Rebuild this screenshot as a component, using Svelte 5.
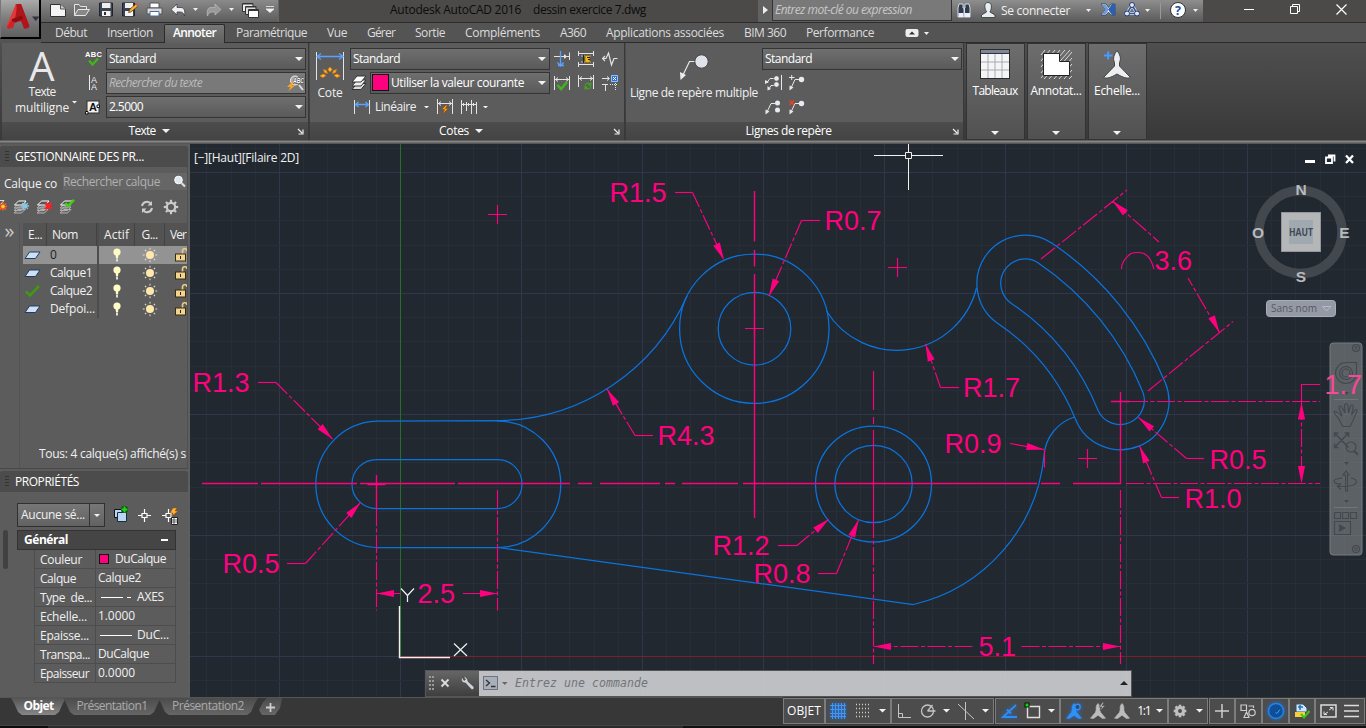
<script>
  const PINK = '#ff007f';

  // Spreads a label's letters so that it takes the given width.
  function fit(node, width) {
    const text = node.textContent;
    if (!width || !text) return;
    const natural = node.getBoundingClientRect().width;
    node.style.letterSpacing = `${(width - natural) / text.length}px`;
  }

  const tabs = [
    ['Début', 32], ['Insertion', 46], ['Annoter', 43], ['Paramétrique', 71], ['Vue', 20], ['Gérer', 28],
    ['Sortie', 30], ['Compléments', 75], ['A360', 26], ['Applications associées', 118], ['BIM 360', 42], ['Performance', 68]
  ];

  const layers = [
    { name: '0', width: 6, selected: true },
    { name: 'Calque1', width: 42 },
    { name: 'Calque2', width: 42, current: true },
    { name: 'Defpoi...', width: 45 }
  ];

  const props = [
    { k: 'Couleur', kw: 42, v: 'DuCalque', vw: 51, swatch: true },
    { k: 'Calque', kw: 36, v: 'Calque2', vw: 43 },
    { k: 'Type  de...', kw: 52, v: 'AXES', vw: 27, line: 'M1 6H23M27 6h4' },
    { k: 'Echelle...', kw: 47, v: '1.0000', vw: 37 },
    { k: 'Epaisse...', kw: 49, v: 'DuC...', vw: 32, line: 'M0 6H32' },
    { k: 'Transpa...', kw: 50, v: 'DuCalque', vw: 51 },
    { k: 'Epaisseur', kw: 49, v: '0.0000', vw: 37 }
  ];

  // Drawing grid: a major line every 121 px, a minor one every fifth of that.
  const gridX = [];
  for (let i = -8; i <= 40; i++) gridX.push({ p: 400.4 + i * 24.2, major: i % 5 === 0 });
  const gridY = [];
  for (let i = -21; i <= 1; i++) gridY.push({ p: 656.4 + i * 24.2, major: i % 5 === 0 });

  const texts = [
    [609.5, 202, 'R1.5'], [824.5, 230, 'R0.7'], [192.5, 392, 'R1.3'], [222.5, 573, 'R0.5'], [417.5, 603, '2.5'],
    [657.5, 445, 'R4.3'], [712.5, 555, 'R1.2'], [753.5, 583, 'R0.8'], [963, 397, 'R1.7'], [944.5, 453, 'R0.9'],
    [1209.5, 469, 'R0.5'], [1184.5, 508, 'R1.0'], [1154.5, 270, '3.6'], [978.5, 656, '5.1']
  ];

  // Leaders: tip, knee and end of the landing.
  const leaders = [
    [724, 260, 692.5, 192.5, 675], [769, 296, 801.5, 220.5, 820], [332.5, 439, 276, 382.5, 258],
    [360.5, 502.5, 305.5, 563.5, 287], [607, 389, 635, 435.5, 653], [829, 519, 797, 545.5, 778],
    [858.5, 520, 836.5, 573.5, 818], [925.5, 344, 940.5, 387.5, 959], [1138.5, 417.5, 1186.5, 458.5, 1204],
    [1139.5, 446, 1161.5, 497.5, 1179]
  ];

  const arrows = [
    ...leaders.map((l) => l.slice(0, 4)),
    [376.5, 593.5, 400, 593.5], [497.5, 593.5, 463, 593.5], [873.5, 646.5, 900, 646.5], [1120.5, 646.5, 1100, 646.5],
    [1301.5, 402, 1301.5, 430], [1301.5, 483.5, 1301.5, 460], [1044, 449.5, 1010, 443.5],
    [1112.5, 201, 1142, 228], [1219.5, 332.5, 1204, 302]
  ];

  function head([x, y, fx, fy]) {
    const d = Math.hypot(fx - x, fy - y);
    const ux = (fx - x) / d;
    const uy = (fy - y) / d;
    const bx = x + ux * 17.5;
    const by = y + uy * 17.5;
    return `${x},${y} ${bx - uy * 3.6},${by + ux * 3.6} ${bx + uy * 3.6},${by - ux * 3.6}`;
  }

  const crosses = [[497.5, 214.5], [897.5, 267.5], [1087.5, 458.5], [754.5, 328.5]];
  const dirs = [0, 45, 90, 135, 180, 225, 270, 315];
</script>

{#snippet t(text, width)}<span class="t" use:fit={width}>{text}</span>{/snippet}

{#snippet caret(w = 8)}<svg class="caret" width={w} height={w / 2} viewBox="0 0 8 4"><path d="M0 0H8L4 4Z" fill="#f2f2f2" /></svg>{/snippet}

{#snippet launcher()}<svg class="launcher" width="7" height="7" viewBox="0 0 7 7"><path d="M1 1L5 5M6 1.5V6H1.5" stroke="#eee" stroke-width="1.2" fill="none" /></svg>{/snippet}

{#snippet sheets(over)}
  <svg width="18" height="16" viewBox="0 0 18 16">
    <path d="M5 10.500H12L8.500 14H1Z M5 8H12L8.500 11.500H1Z M5 5.500H12L8.500 9H1Z" fill="#666" stroke="#b0b0b0" />
    <path d="M5.500 2H13L9.500 6H1.500Z" fill="#555" stroke="#fff" />
    {#if over === 'frost'}
      <path d="M12 3V11M8 7H16M9.200 4.200L14.800 9.800M14.800 4.200L9.200 9.800" stroke="#8ac6e0" stroke-width="1.300" />
    {:else if over === 'del'}
      <path d="M9.500 4L15.500 10M15.500 4L9.500 10" stroke="#ff1f1f" stroke-width="2.500" />
    {:else if over === 'ok'}
      <path d="M6.500 4L9 7L15 .8" stroke="#3fd10c" stroke-width="2.500" fill="none" />
    {/if}
  </svg>
{/snippet}

{#snippet person(color, extra)}
  <svg class:glow={extra === 'ring'} width="18" height="18" viewBox="0 0 18 18">
    <path d="M9 1.500C7.300 3 6.800 5.500 7.200 8L6.300 10.500L1.500 16.200L4.500 16.500L9 13.200L13.500 16.500L16.500 16.200L11.700 10.500L10.800 8C11.200 5.500 10.700 3 9 1.500Z" fill={color} stroke={color} stroke-width=".6" />
    {#if extra === 'ring'}<circle cx="12.500" cy="5" r="2.700" fill="#2d4a70" stroke={color} stroke-width="1.400" />{/if}
    {#if extra === 'bolt'}<path d="M13.500 .5L10 5H13L11 9L16 3.800H13L15 .5Z" fill={color} stroke="#505050" stroke-width=".6" />{/if}
  </svg>
{/snippet}

{#snippet dimIcon(kind)}
  <svg width="16" height="16" viewBox="0 0 16 16" fill="none" stroke="#e4e4e4">
    {#if kind === 'break'}
      <path d="M0 5.500H15M15.500 1.500V9M10.500 3.500V7.500M12 4l-2 1.500l2 1.500" />
      <path d="M6.500 0V15M3.500 11.500L6.500 15L9.500 11.500M4 14.500H10" stroke="#5aa2ff" stroke-width="1.300" />
    {:else if kind === 'space'}
      <path d="M1 2.500H15M.5 0V5M15.500 0V5M1 13.500H15M.5 11V16M15.500 11V16" />
      <path d="M3 5H13M3 11H13" stroke="#bbb" stroke-dasharray="2 1" />
      <path d="M7 4.500H12V11.500H7Z" fill="#f5b617" stroke="#6e5000" stroke-width=".6" /><path d="M9 6.500H12M10 8.500H12M5.500 4V12" stroke="#222" />
    {:else if kind === 'jog'}
      <path d="M0 7.500H4L6.500 2L9.500 14L12 7.500H15.500M3 5L.5 7.500L3 10" stroke-width="1.200" />
    {:else if kind === 'check'}
      <path d="M.5 1V15M15.500 1V15M1 4.500H15M4 2.500L1.500 4.500L4 6.500M12 2.500L14.500 4.500L12 6.500" />
      <path d="M3.500 10L7 14L13 7" stroke="#3fb618" stroke-width="2.500" />
    {:else if kind === 'update'}
      <path d="M.5 0V12M15.500 0V14M1 3.500H15M4 1.500L1.500 3.500L4 5.500M12 1.500L14.500 3.500L12 5.500" />
      <path d="M7 10.500A3 3 0 0 1 12.500 9.500M12.700 7.500V10H10.300M12.800 11.500A3 3 0 0 1 7.300 12.500M7 14.500V12H9.500" stroke="#3fa51c" stroke-width="1.300" />
    {:else if kind === 'assoc'}
      <path d="M0 3.500H7M5 1.500L7.500 3.500L5 5.500M0 9.500H6M3.500 9.500V16" /><path d="M8 9.500H15.500M13.500 8V16" stroke-dasharray="1 1" />
      <path d="M9.500 .5H15.500V6.500H9.500Z" fill="#2f6fd0" stroke="#8cc4ff" /><path d="M11 2L14 5M14 2L11 5" stroke="#fff" />
    {:else if kind === 'linear'}
      <path d="M.5 1V15M15.500 1V15" /><path d="M2 5.500H14M4.500 3L1.500 5.500L4.500 8M11.500 3L14.500 5.500L11.500 8" stroke="#5aa2ff" stroke-width="1.300" />
    {:else if kind === 'quick'}
      <path d="M.5 0V15M15.500 0V15M1 4.500H15M4 2.500L1.500 4.500L4 6.500M12 2.500L14.500 4.500L12 6.500" />
      <path d="M9 6L4.500 10.500H7.500L5.500 15L11.500 9.500H8.500L10.500 6Z" fill="#ff9d1a" stroke="#7a3b00" stroke-width=".5" />
    {:else if kind === 'cont'}
      <path d="M.5 1V15M5.500 3V12M10.500 1V15M15.500 3V15M1 5.500H15M2.500 4v3M7.500 4v3M12.500 4v3" />
    {/if}
  </svg>
{/snippet}

{#snippet mleader(kind)}
  <svg width="18" height="16" viewBox="0 0 18 16" fill="none" stroke="#e8e8e8">
    {#if kind === 'align'}
      <path d="M10 3.500H5L1.500 8M10 10.500H6L4 14M16.500 0V15" /><path d="M0 5V9L4 7ZM2.500 11V15.500L6 14Z" fill="#e8e8e8" stroke="none" />
      <circle cx="11.500" cy="3.500" r="2.700" fill="#e8ecf2" stroke="#444" stroke-width=".6" /><circle cx="11.500" cy="9.500" r="2.700" fill="#e8ecf2" stroke="#444" stroke-width=".6" />
    {:else if kind === 'collect'}
      <path d="M10 4.500H6L2 13" /><path d="M.5 10.500V15.500L4.500 12.500Z" fill="#e8e8e8" stroke="none" />
      <circle cx="12.500" cy="4" r="2.500" fill="#e8ecf2" stroke="none" /><circle cx="12.500" cy="11" r="2.500" fill="#e8ecf2" stroke="none" />
    {:else}
      <path d="M10 4.500H6L2 13" /><path d="M.5 10.500V15.500L4.500 12.500Z" fill="#e8e8e8" stroke="none" />
      <circle cx="12.500" cy="4.500" r="2.700" fill="#e8ecf2" stroke="none" />
      {#if kind === 'add'}<path d="M0 2.500H5.500M2.700 0V5" />{:else}<path d="M.5 1.500L5 6M5 1.500L.5 6" stroke="#f2401d" stroke-width="1.300" />{/if}
    {/if}
  </svg>
{/snippet}

<div class="app">
  <!-- Title bar and ribbon tabs, with the application button beside both -->
  <header>
    <button class="logo" aria-label="A">
      <svg width="38" height="36" viewBox="0 0 38 36">
        <path d="M14 3H19L27 25C24 24 21 23 19 20L9 23L5 27.500Z" fill="#c21c20" />
        <path d="M14 3L16 16L9 23L5 27.500V24Z" fill="#e2383a" />
        <path d="M15.500 3L19 3L27.500 25C27.500 27 24 28 22 27.500L19 20L13 18Z" fill="#b0151b" />
        <path d="M10 18L20 14.500L21 18L9 23Z" fill="#8c0d12" />
        <path d="M9 20L5 25.500L6 28L11 27L13 21Z" fill="#cf2427" />
        <path d="M30 15.500H37.500L33.700 20Z" fill="#2e3440" />
      </svg>
    </button>
    <div class="heads">
      <div class="titlebar">
        <div class="quick">
          <svg width="238" height="22" viewBox="0 0 238 22" fill="none">
            <path d="M9.500 4.500H19.500L24.500 9V16.500H9.500Z" fill="#f4f4f4" stroke="#333" /><path d="M19.500 4.500V9H24.500" fill="#ccc" stroke="#555" />
            <path d="M33.500 15.500V4.500H38L39.500 6.500H45.500V9" fill="#777" stroke="#e6e6e6" /><path d="M33.500 15.500L37 9.500H48.500L44.500 15.500Z" fill="#888" stroke="#e6e6e6" />
            <path d="M58.500 3H71.500V16H58.500Z" fill="#3b4250" stroke="#20242c" /><path d="M61 3H69.500V8H61Z" fill="#eee" /><path d="M61 11H69.500V16H61Z" fill="#f4f4f4" /><path d="M63 12h2v3h-2z" fill="#333" />
            <path d="M81.500 3H93.500V16H81.500Z" fill="#3b4250" stroke="#20242c" /><path d="M84 3H92V8H84Z" fill="#eee" /><path d="M84 11H92V16H84Z" fill="#f4f4f4" /><path d="M89 9L95 4L97 6L90 12L87.500 12.500Z" fill="#efb53a" stroke="#5a3300" stroke-width=".7" /><path d="M94 4L95.500 3L97.500 5.500L96.500 6.500Z" fill="#e25544" />
            <path d="M109 3H118V8H109Z" fill="#fff" stroke="#555" /><path d="M106 8H121V14H106Z" fill="#d9dbdf" stroke="#555" /><path d="M109 11.500H118V16H109Z" fill="#fff" stroke="#4b6e9e" />
            <path d="M130 9.500L136 4V7.500H140C143 7.500 144.500 10.500 143.500 16C142.500 13 141.500 12 139 12H136V15Z" fill="#eceff4" stroke="#333" stroke-width=".7" />
            <path d="M152 8H157L154.500 11Z" fill="#eee" />
            <path d="M180 9.500L174 4V7.500H170C167 7.500 165.500 10.500 166.500 16C167.500 13 168.500 12 171 12H174V15Z" fill="#999" stroke="#bbb" stroke-width=".7" />
            <path d="M188 8H193L190.500 11Z" fill="#eee" />
            <path d="M201.500 3.500H212V11.500H201.500Z" fill="#eee" stroke="#333" /><path d="M204.500 6.500H215V14.500H204.500Z" fill="#ddd" stroke="#333" /><path d="M207.500 9.500H217.500V17.500H207.500Z" fill="#fff" stroke="#333" /><path d="M202 4h10M205 7h10M208 10.500h9" stroke="#333" />
            <path d="M225 6.500H233M225 9H233L229 12.500Z" fill="#f4f4f4" stroke="#eee" stroke-width=".8" />
          </svg>
        </div>
        <div class="title">{@render t('Autodesk AutoCAD 2016', 131)}{@render t('dessin exercice 7.dwg', 113)}</div>
        <div class="search"><span class="play"></span><div class="field">{@render t('Entrez mot-clé ou expression', 137)}</div></div>
        <div class="account">
          <svg width="49" height="22" viewBox="0 0 49 22">
            <path d="M7 4h4v4h1v9H6V8ZM13 4h4l1 4v9h-5.500V8h.5z" fill="#2f3a4c" stroke="#dfe6ee" stroke-width=".9" /><path d="M6.500 13h5v4h-5zM13 13h5v4h-5z" fill="#eef" />
            <path d="M36 2.500C33 2.500 32.500 5 33 8C33.500 10.500 34.500 11 34.500 12L29.500 15V17.500H43V15L38 12C38 11 39 10.500 39.300 8C39.800 5 39 2.500 36 2.500Z" fill="#e9edf2" stroke="#344" stroke-width=".9" />
          </svg>
          {@render t('Se connecter', 69)}
          <svg width="133" height="22" viewBox="0 0 133 22">
            <path d="M16 9H21L18.500 12Z" fill="#eee" />
            <path d="M31 4H36L38.500 7.500L41 4H45V15H41L38.500 12L36 15H31L35.500 9.500Z" fill="#fff" stroke="#273c60" stroke-width=".8" /><path d="M38 9.500L42 4H45V15H42Z" fill="#2c5faf" /><path d="M31.500 4.500H35.500L38 8V11L35.500 14.500H31.500L35.500 9.500Z" fill="#6e9ad6" />
            <path d="M62 5L57 13.500H67Z" fill="none" stroke="#dbe6fa" stroke-width="3" /><path d="M62 5L57 13.500H67Z" fill="none" stroke="#35549a" stroke-width="1.500" /><circle cx="62" cy="5" r="2.500" fill="#dce7fb" stroke="#223a6c" /><circle cx="57" cy="13.500" r="2.500" fill="#dce7fb" stroke="#223a6c" /><circle cx="67" cy="13.500" r="2.500" fill="#dce7fb" stroke="#223a6c" />
            <path d="M75 9H80L77.500 12Z" fill="#eee" /><path d="M90.500 3V19" stroke="#999" />
            <circle cx="108" cy="10" r="7.500" fill="#fff" stroke="#333" />
            <text x="108" y="14.500" text-anchor="middle" font-family="Open Sans, sans-serif" font-weight="700" font-size="12.500" fill="#1e4fa0">?</text>
            <path d="M123 9H128L125.500 12Z" fill="#eee" />
          </svg>
        </div>
        <div class="window">
          <svg width="11" height="11"><path d="M0 5.500H10" stroke="#fff" /></svg>
          <svg width="11" height="11" fill="none" stroke="#fff"><path d="M.5 2.500H7.500V9.500H.5ZM2.500 2.500V.5H9.500V7.500H7.500" /></svg>
          <svg width="11" height="11" stroke="#fff" stroke-width="1.200"><path d="M.5 .5L10.500 10.500M10.500 .5L.5 10.500" /></svg>
        </div>
      </div>
      <nav class="tabs">
        {#each tabs as [name, width]}
          <div class="tab" class:active={name === 'Annoter'} style:width="{width}px">{@render t(name, width)}</div>
        {/each}
        <svg width="26" height="10" viewBox="0 0 26 10"><rect x=".5" y="1" width="13" height="8" rx="2" fill="#eee" /><path d="M4 6.500L7 3.500L10 6.500Z" fill="#333" /><path d="M19 4H24L21.500 7Z" fill="#eee" /></svg>
      </nav>
    </div>
  </header>

  <section class="ribbon">
    <div class="panel texte">
      <div class="body">
        <div class="big">
          <span class="bigA">A</span>
          {@render t('Texte', 27)}
          <div class="two">{@render t('multiligne', 54)}</div>
        </div>
        <div class="downcaret">{@render caret(5)}</div>
        <div class="side">
          <svg width="18" height="16" viewBox="0 0 18 16"><text x="0" y="5.500" font-family="Liberation Sans, sans-serif" font-size="7.500" font-weight="700" fill="#fff" textLength="17">ABC</text><path d="M4 9.500L7.500 13.500L13 7.500" fill="none" stroke="#3fb618" stroke-width="2.500" /></svg>
          <svg width="18" height="16" viewBox="0 0 18 16"><path d="M4.500 0V15" stroke="#eee" /><text x="6" y="7.500" font-family="Liberation Sans, sans-serif" font-size="9" fill="#eee">A</text><text x="6" y="15" font-family="Liberation Sans, sans-serif" font-size="9" fill="#eee">A</text></svg>
          <svg width="18" height="16" viewBox="0 0 18 16"><rect x="2" y="2" width="12" height="12" fill="#f2f2f2" stroke="#333" /><text x="4" y="12" font-family="Liberation Sans, sans-serif" font-size="11" font-weight="700" fill="#111">A</text><path d="M.5 12.500h2.500v2.500h-2.500zM12 6h2.500v2.500h-2.500z" fill="#fff" stroke="#111" /></svg>
        </div>
        <div class="stack">
          <div class="combo">{@render t('Standard', 47)}{@render caret()}</div>
          <div class="combo find">{@render t('Rechercher du texte', 93)}
            <svg width="18" height="18" viewBox="0 0 18 18"><circle cx="8" cy="6.500" r="4.500" fill="#aaa" stroke="#eee" /><path d="M12 11L16 16" stroke="#ddd" stroke-width="2" /><text x="6" y="8.500" font-family="Liberation Sans, sans-serif" font-size="6.500" font-weight="700" fill="#fff" textLength="11" lengthAdjust="spacingAndGlyphs" stroke="#333" stroke-width="1" paint-order="stroke">ABC</text><path d="M5 8L0 13H3.500L1.500 17L8 11.500H4.500L7 8Z" fill="#ffa51f" /></svg>
          </div>
          <div class="combo">{@render t('2.5000', 34)}{@render caret()}</div>
        </div>
      </div>
      <div class="foot">{@render t('Texte', 27)}{@render caret()}{@render launcher()}</div>
    </div>

    <div class="panel cotes">
      <div class="body">
        <div class="big">
          <svg width="30" height="32" viewBox="0 0 30 32" fill="none">
            <path d="M1.500 2V30M28.500 2V30" stroke="#e4e4e4" /><path d="M2 6.500H28M6 3.500L2 6.500L6 9.500M24 3.500L28 6.500L24 9.500" stroke="#5aa2ff" stroke-width="1.300" />
            <path d="M15 17l2 2.500l-2 2.500l-2-2.500zM8.500 19.500l3 1l1 3l-3-1zM21.500 19.500l-3 1l-1 3l3-1zM5 26l3-2l3 1.500l-3 2zM25 26l-3-2l-3 1.500l3 2z" fill="#ffbf2e" stroke="#e2750d" stroke-width=".8" />
          </svg>
          {@render t('Cote', 25)}
        </div>
        <div class="stack">
          <div class="combo">{@render t('Standard', 47)}{@render caret()}</div>
          <div class="line">
            <svg width="20" height="16" viewBox="0 0 20 16"><path d="M7 8.500H16L11 14.500H2Z" fill="#ddd" stroke="#333" /><path d="M7 5H16L11 11H2Z" fill="#eee" stroke="#333" /><path d="M7 1H16L11 7H2Z" fill="#fff" stroke="#333" /></svg>
            <div class="combo color"><i class="sw"></i>{@render t('Utiliser la valeur courante', 133)}{@render caret()}</div>
          </div>
          <div class="line tools">{@render dimIcon('linear')}{@render t('Linéaire', 41)}{@render caret(5)}{@render dimIcon('quick')}{@render dimIcon('cont')}{@render caret(5)}</div>
        </div>
        <div class="icons">
          {@render dimIcon('break')}{@render dimIcon('space')}{@render dimIcon('jog')}
          {@render dimIcon('check')}{@render dimIcon('update')}{@render dimIcon('assoc')}
        </div>
      </div>
      <div class="foot">{@render t('Cotes', 30)}{@render caret()}{@render launcher()}</div>
    </div>

    <div class="panel lignes">
      <div class="body">
        <div class="big">
          <svg width="30" height="32" viewBox="0 0 30 32"><path d="M3 25L10.500 9.500H17" fill="none" stroke="#e8e8e8" stroke-width="1.200" /><path d="M1 20L1.500 28L7 23Z" fill="#eee" /><circle cx="22.500" cy="9.500" r="6.700" fill="#dfe3e9" stroke="#444" /></svg>
          {@render t('Ligne de repère multiple', 128)}
        </div>
        <div class="stack">
          <div class="combo">{@render t('Standard', 47)}{@render caret()}</div>
          <div class="icons">{@render mleader('align')}{@render mleader('add')}{@render mleader('collect')}{@render mleader('remove')}</div>
        </div>
      </div>
      <div class="foot">{@render t('Lignes de repère', 86)}{@render launcher()}</div>
    </div>

    <div class="tile">
      <svg width="30" height="32" viewBox="0 0 30 32"><rect x=".5" y=".5" width="29" height="29" fill="#f4f5f7" stroke="#2b2b2b" /><path d="M1 1H29V4H1Z" fill="#7b8798" /><path d="M1 13H29M1 21H29M8 5V29M15 5V29M22 5V29" stroke="#a8aab0" /><path d="M1 4.500H29" stroke="#333" /></svg>
      {@render t('Tableaux', 45)}{@render caret()}
    </div>
    <div class="tile">
      <svg width="33" height="32" viewBox="0 0 33 32"><path d="M1 6L5 1M1 12L10 1M1 18L15 1M1 24L20 1M1 29L25 1M4 30L30 1M9 30L32 3M14 30L32 9M19 30L32 15M24 30L32 21M29 30L32 27" stroke="#d8d8d8" /><path d="M3.500 4.500H19.500V12.500H29.500V26.500H3.500Z" fill="#fff" stroke="#222" /></svg>
      {@render t('Annotat...', 51)}{@render caret()}
    </div>
    <div class="tile">
      <svg width="30" height="32" viewBox="0 0 30 32"><path d="M15 1.500C12 5.500 10.500 9.500 12.500 13.500V17L1.500 28.500C5 30 9 28.500 15 25C21 28.500 25 30 28.500 28.500L17.500 17V13.500C19.500 9.500 18 5.500 15 1.500Z" fill="#eceef1" stroke="#444" /><path d="M2 6.500H10.500M6.200 2.500V10.500" stroke="#4b9bff" stroke-width="2" /></svg>
      {@render t('Echelle...', 46)}{@render caret()}
    </div>
  </section>

  <main>
    <aside>
      <h2><i class="grip"></i>{@render t('GESTIONNAIRE DES PR...', 129)}</h2>
      <div class="layers">
        <div class="find-row">{@render t('Calque co', 53)}
          <div class="lsearch">{@render t('Rechercher calque', 97)}
            <svg width="14" height="14" viewBox="0 0 14 14"><circle cx="5.500" cy="5" r="3.800" fill="#dfe8f2" stroke="#fff" /><path d="M8.500 8L12 11.500" stroke="#ddd" stroke-width="2.200" /></svg>
          </div>
        </div>
        <div class="lay-icons">
          <svg width="7" height="16"><path d="M0 1.500H4L1 5" fill="none" stroke="#ddd" /><path d="M3 3.500V11.500M-1 7.500H7M0 4.500L6 10.500M6 4.500L0 10.500" stroke="#ff5b1f" stroke-width="1.600" /><circle cx="3" cy="7.500" r="1.700" fill="#ffd92f" /></svg>
          {@render sheets('frost')}{@render sheets('del')}{@render sheets('ok')}
          <svg class="refresh" width="14" height="14" viewBox="0 0 14 14" fill="none" stroke="#ccc" stroke-width="2"><path d="M2 6A5 5 0 0 1 11 4M12 8A5 5 0 0 1 3 10" /><path d="M12 1V5.500H7.500ZM2 13V8.500H6.500Z" fill="#ccc" stroke="none" /></svg>
          <svg width="16" height="16" viewBox="0 0 16 16"><circle cx="8" cy="8" r="4.200" fill="none" stroke="#ccc" stroke-width="2.200" /><g stroke="#ccc" stroke-width="2.200">{#each dirs as d}<path d="M8 .8V3.500" transform="rotate({d} 8 8)" />{/each}</g></svg>
        </div>
        <div class="table">
          <div class="expand">»</div>
          <div class="rows">
            <div class="row hd"><span>{@render t('E...', 14)}</span><span>{@render t('Nom', 26)}</span><span>{@render t('Actif', 25)}</span><span>{@render t('G...', 16)}</span><span>{@render t('Ver', 16)}</span></div>
            {#each layers as l}
              <div class="row" class:sel={l.selected}>
                <span>
                  {#if l.current}<svg width="18" height="14" viewBox="0 0 18 14"><path d="M2 7.500L6 11.500L15 2" fill="none" stroke="#3d9a12" stroke-width="2.600" /></svg>
                  {:else}<svg width="18" height="14" viewBox="0 0 18 14"><path d="M5.500 4H16L11.500 10.500H1Z" fill="#cfe0f5" stroke="#1e3c66" /></svg>{/if}
                </span>
                <span>{@render t(l.name, l.width)}</span>
                <span><svg width="8" height="14" viewBox="0 0 8 14"><circle cx="4" cy="4" r="3.600" fill="#fffbc5" /><path d="M2.500 6H5.500L5 10.500H3Z" fill="#fffbc5" /><path d="M3 11H5V13.500H3Z" fill="#ddd" /></svg></span>
                <span><svg width="16" height="16" viewBox="0 0 16 16"><circle cx="8" cy="8" r="4" fill="#ffe7ad" /><g stroke="#e8e2cf">{#each dirs as d}<path d="M8 .8V2.600" transform="rotate({d} 8 8)" />{/each}</g></svg></span>
                <span><svg width="12" height="14" viewBox="0 0 12 14"><path d="M7.500 6V3A2.200 2.200 0 0 1 12 3" fill="none" stroke="#e8c987" stroke-width="1.700" /><rect x=".5" y="6" width="10" height="7" fill="#f3d48f" stroke="#3a2a0c" /><path d="M5.500 8V11" stroke="#222" /></svg></span>
              </div>
            {/each}
            <div class="count">{@render t('Tous: 4 calque(s) affiché(s) s', 147)}</div>
          </div>
        </div>
      </div>
      <h2 class="second"><i class="grip"></i>{@render t('PROPRIÉTÉS', 64)}</h2>
      <div class="props">
        <i class="scroll"></i>
        <div class="inner">
          <div class="selrow">
            <div class="select">{@render t('Aucune sé...', 64)}<b>{@render caret(6)}</b></div>
            <svg width="66" height="20" viewBox="0 0 66 20" fill="none">
              <path d="M2.500 4.500H10.500V12.500H2.500Z" fill="#b9d7f5" stroke="#111" /><path d="M5.500 7.500H14.500V16.500H5.500Z" fill="#b9d7f5" stroke="#1a2a40" /><path d="M12.500 1V8M9 4.500H16" stroke="#0c4d0c" stroke-width="4" /><path d="M12.500 1.500V7.500M9.500 4.500H15.500" stroke="#22d322" stroke-width="2" />
              <path d="M32.500 4V8M32.500 13V17M26 10.500H30M35 10.500H39M30 8.500H35V12.500H30Z" stroke="#fff" stroke-width="1.200" />
              <path d="M56.500 4V8M56.500 13V17M50 10.500H54M54 8.500H59V12.500H54Z" stroke="#fff" stroke-width="1.200" /><path d="M61 3L58 8H61L60 11L66 6H63L65 3Z" fill="#ffb52e" stroke="#a24600" stroke-width=".5" /><path d="M59.500 12.500H65.500V19.500H59.500Z" fill="#fff" stroke="#222" /><path d="M60 15H65M60 17H65M62 13V19" stroke="#222" stroke-width=".7" />
            </svg>
          </div>
          <div class="group"><b>{@render t('Général', 44)}</b><i></i></div>
          {#each props as p}
            <div class="prop">
              <span class="k">{@render t(p.k, p.kw)}</span>
              <span class="v">
                {#if p.swatch}<i></i>{/if}
                {#if p.line}<svg width="37" height="12"><path d={p.line} stroke="#fff" transform="translate(1 .5)" /></svg>{/if}
                {@render t(p.v, p.vw)}
              </span>
            </div>
          {/each}
        </div>
      </div>
    </aside>

    <div class="canvas">
      <svg class="drawing" width="1176" height="553" viewBox="190 144 1176 553" fill="none">
        <rect x="190" y="144" width="1176" height="553" fill="#212830" />
        <g shape-rendering="crispEdges">
          {#each gridX as g}<path d="M{g.p} 144V697" stroke={g.major ? '#32364a' : '#272e37'} />{/each}
          {#each gridY as g}<path d="M190 {g.p}H1366" stroke={g.major ? '#32364a' : '#272e37'} />{/each}
          <path d="M400.500 144V657" stroke="#227226" /><path d="M400 656.500H1366" stroke="#7b2026" />
        </g>
        <g stroke="#0b73dd" stroke-width="1.250">
          <path d="M504 420.500L376.500 421.200A63.200 63.200 0 0 0 376.500 547.500H497.500A63.200 63.200 0 0 0 497.500 421" />
          <path d="M376.500 459.500H497.500A24.200 24.200 0 0 1 497.500 508.500H376.500A24.200 24.200 0 0 1 376.500 459.500Z" />
          <circle cx="754.300" cy="328.700" r="74.700" /><circle cx="754.500" cy="328.700" r="36.300" />
          <circle cx="873.500" cy="484" r="58" /><circle cx="873.500" cy="484" r="38.700" />
          <path d="M500 420.500A208 208 0 0 0 687 296" /><path d="M826.500 311A82.300 82.300 0 0 0 976.500 288" />
          <path d="M1052.100 243.200A308.500 308.500 0 0 1 1165.400 383.100A48.400 48.400 0 0 1 1075.600 419.500A211.600 211.600 0 0 0 997.900 323.400A48.400 48.400 0 0 1 1052.100 243.200Z" />
          <path d="M1038.600 263.200A284.200 284.200 0 0 1 1142.900 392.200A24.200 24.200 0 0 1 1098.100 410.400A235.800 235.800 0 0 0 1011.400 303.400A24.200 24.200 0 0 1 1038.600 263.200Z" />
          <path d="M1074.500 417A43.600 43.600 0 0 0 1044 456A170 170 0 0 1 913.500 604.500L497.500 547.500" />
        </g>
        <g stroke={PINK} stroke-width="1.150">
          {#each leaders as [x, y, kx, ky, ex]}
            <path d="M{ex} {ky}H{kx}" /><path d="M{kx} {ky}L{x} {y}" stroke-dasharray="16 2.500 4 2.500" />
          {/each}
          {#each crosses as [x, y]}<path d="M{x - 9.5} {y}H{x + 9.5}M{x} {y - 9.5}V{y + 9.5}" />{/each}
          <g stroke-width="1.400">
            <path d="M202 483.500H258M261 483.500H357M360 483.500H455M458 483.500H570M578 483.500H592M600 483.500H660M665 483.500H675M682 483.500H738M743 483.500H1037M1041 483.500H1060M1073 483.500H1120.500V392" />
            <path d="M754.500 191V241.500M754.500 250V266.500M754.500 274V518" />
            <path d="M367.500 484.500H385.500M1111 401.500H1130M376.500 475V508" />
          </g>
          <path d="M873.500 371V410M873.500 417V424M873.500 430V520" />
          <g stroke-dasharray="18 2.500 4 2.500">
            <path d="M873.500 520V664M376.500 508V610.500M497.500 490V610.500M1120.500 490V664M1130 401.500H1320M1126 483.500H1320" />
            <path d="M873.500 646.500H975M1120.500 646.500H1019M1301.500 402V483.500" />
            <path d="M1041 259L1127 190M1148 391L1233 321.500M1112.500 201L1159 242M1219.500 332.500L1188 278" />
          </g>
          <path d="M376.500 593.500H401M463 593.500H497.500M1301.500 402V384.500H1320M1010 443.500L1044 449.500M1044.500 450V467.500" />
          <path d="M1121.500 269C1121.500 263 1126 257 1131 253.500Q1137 251.500 1144 253.500C1150 257 1152 262 1154 269" />
        </g>
        <g fill={PINK}>{#each arrows as a}<polygon points={head(a)} />{/each}</g>
        <g class="dims" fill={PINK}>{#each texts as [x, y, s]}<text {x} {y}>{s}</text>{/each}</g>
        <g stroke="#f0f0f0">
          <path d="M399.500 606V657.500H450" stroke-width="1.400" />
          <path d="M401 588.500L407.500 595.500L414 588.500M407.500 595V602M454 643.500L467 656M467 643.500L454 656" stroke-width="1.200" />
          <path d="M874 155.500H905M911 155.500H943M908.500 144V152M908.500 159V190M905.500 152.500H911.500V158.500H905.500Z" />
        </g>
        <!-- View cube -->
        <circle cx="1300.500" cy="232" r="41.500" stroke="#43484f" stroke-width="9.500" />
        <rect x="1281.500" y="212.500" width="39" height="39" fill="#b4b6b8" stroke="#93979b" /><rect x="1289" y="220" width="24" height="24" fill="#a0a8b0" />
        <text x="1289" y="236" class="ui" font-size="10.500" font-weight="700" fill="#414a54" textLength="24" lengthAdjust="spacingAndGlyphs">HAUT</text>
        <g class="compass" font-size="15.500" font-weight="700" fill="#b8babd" text-anchor="middle">
          <text x="1301" y="194.500">N</text><text x="1258" y="237.500">O</text><text x="1344.500" y="237.500">E</text><text x="1301" y="281.500">S</text>
        </g>
        <rect x="1266.500" y="300.500" width="69" height="16" rx="3" fill="#9599a5" stroke="#a9adb8" /><text x="1271" y="312" class="ui" font-size="10" fill="#555a63" textLength="46">Sans nom</text><path d="M1322.500 306.500H1331L1326.700 311Z" stroke="#b6bac4" />
        <path d="M1305 161.500H1315" stroke="#fff" stroke-width="3" /><path d="M1326 157.500H1332V163H1326ZM1328 155.500H1334.500V161.500" stroke="#fff" stroke-width="1.800" /><path d="M1346 155.500L1353 163M1353 155.500L1346 163" stroke="#fff" stroke-width="2.300" />
        <!-- Navigation bar -->
        <rect x="1330" y="343" width="32" height="212" rx="3" fill="#888b8d" fill-opacity=".58" stroke="#747a7f" />
        <g stroke="#42484e" stroke-width="1.100">
          <circle cx="1356" cy="348" r="3.500" /><path d="M1354.500 346.500L1357.500 349.500M1357.500 346.500L1354.500 349.500" />
          <path d="M1335.500 373A10.500 10.500 0 0 1 1346 362.500H1356.500V373A10.500 10.500 0 0 1 1335.500 373Z" /><circle cx="1346" cy="373" r="6.500" /><circle cx="1346" cy="373" r="4" />
          <path d="M1334 399.500H1358M1334 507.500H1358" stroke="#707579" />
          <path d="M1339 419C1336 415 1333 413 1334.500 411.500C1337 411 1340 414 1342 416L1339 408C1339 405 1341.500 405.500 1342.500 408L1345 413L1344.500 405C1345.500 403 1347.500 403.500 1348 406L1348.500 413L1350.500 406C1352 404 1353.500 405 1353 408L1351.500 415L1355 410C1357 409 1357.500 410.500 1356.500 412.500C1354 417 1353 422 1350 426.500H1343C1341 424 1340 421 1339 419Z" />
          <path d="M1334.500 433L1348.500 447.500M1348.500 433L1334.500 447.500M1334.500 437V433H1338.500M1344.500 433H1348.500V437M1334.500 443.500V447.500H1338.500" stroke-width="1.500" /><circle cx="1351" cy="447" r="5" /><path d="M1354 451L1358 454.500" stroke-width="2" />
          <path d="M1345.500 491V475H1343L1346 471L1349 475H1347.500V491ZM1341 484.500C1331 483 1332 479 1342 478M1351 478C1360 480 1358 486 1345 486.500H1338M1341 483.500L1337.500 486.500L1341 489.500" />
          <path d="M1334.500 512.500H1340.500V518.500H1334.500ZM1342.500 512.500H1348.500V518.500H1342.500ZM1350.500 512.500H1356.500V518.500H1350.500ZM1334.500 521.500H1350.500V534.500H1334.500Z" />
          <path d="M1339 524V532L1346 528ZM1344 392h5l-2.500 3zM1344 462h5l-2.500 3zM1344 500h5l-2.500 3z" fill="#42484e" stroke="none" /><circle cx="1356" cy="549" r="3.500" /><path d="M1354 548H1358M1354.500 550H1357.500" />
        </g>
        <text class="dims" x="1324.500" y="394" fill="#fb4797">1.7</text>
      </svg>
      <span class="viewlabel">{@render t('[−][Haut][Filaire 2D]', 105)}</span>
      <div class="command">
        <div class="tools">
          <svg width="54" height="25" viewBox="0 0 54 25"><g fill="#999">{#each [5, 9, 13, 17] as y}<path d="M3 {y}h2v2h-2zM6 {y}h2v2h-2z" />{/each}</g><path d="M15.500 8.500L22.500 15.500M22.500 8.500L15.500 15.500" stroke="#ddd" stroke-width="1.800" /><path d="M36 6C34.500 9 36 12 39.500 12L45 18C47 19.500 49 17.500 47.500 15.500L42 10.500C42 7.500 40 5.500 37.500 5.500L39.500 8.500L38 9.500Z" fill="#cfd3d9" stroke="#333" stroke-width=".5" /></svg>
        </div>
        <div class="input">
          <svg width="26" height="16" viewBox="0 0 26 16"><rect x=".5" y="1.500" width="14" height="13" fill="#a9afb8" stroke="#6d7480" /><path d="M3 5L6.500 8L3 11M8 11.500H12.500" fill="none" stroke="#333" stroke-width="1.300" /><path d="M19 7H24.500L21.700 10Z" fill="#666" /></svg>
          {@render t('Entrez une commande', 133)}
          <i></i>
        </div>
      </div>
    </div>
  </main>

  <footer>
    <div class="sheetsbar">
      <div class="sheet on" style:width="51px"><span>{@render t('Objet', 30)}</span></div>
      <div class="sheet" style:width="94px"><span>{@render t('Présentation1', 71)}</span></div>
      <div class="sheet" style:width="96px"><span>{@render t('Présentation2', 72)}</span></div>
      <div class="sheet plus" style:width="19px"><span><svg width="9" height="9"><path d="M4.500 0V9M0 4.500H9" stroke="#ccc" stroke-width="1.800" /></svg></span></div>
    </div>
    <div class="status">
      <div class="seg one" style:width="42px">{@render t('OBJET', 34)}</div>
      <div class="seg" style:width="66px">
        <svg class="glow" width="16" height="16"><path d="M2.500 0V16M5.500 0V16M8.500 0V16M11.500 0V16M14.500 0V16M0 2.500H16M0 6.500H16M0 10.500H16M0 13.500H16" stroke="#3f96f5" stroke-width="1.200" /></svg>
        <svg width="16" height="16"><path d="M1 1.500H15M1 5.500H15M1 9.500H15M1 13.500H15" stroke="#d0d0d0" stroke-dasharray="1 2" stroke-width="1.300" /></svg>{@render caret(7)}
      </div>
      <div class="seg" style:width="103px">
        <svg width="16" height="16" fill="none" stroke="#c4c4c4"><path d="M2.500 1V14.500H15M2.500 10.500H6.500V14.500" /></svg>
        <svg width="16" height="16" fill="none" stroke="#c4c4c4" stroke-width="1.300"><circle cx="7.500" cy="8" r="6" /><path d="M7.500 8H15.500M7.500 8L12.500 2" /></svg>{@render caret(7)}
        <svg width="18" height="18" fill="none" stroke="#c4c4c4"><path d="M1 2L17 17M8.500 0V18" /></svg>{@render caret(7)}
      </div>
      <div class="seg" style:width="65.500px">
        <svg class="glow" width="18" height="16" fill="none" stroke="#2f8df2" stroke-width="1.800"><path d="M16 2L3 14H17" /><path d="M7 6.500L11 10.500" /></svg>
        <svg width="17" height="18" fill="none" stroke="#e0e0e0"><path d="M3.500 4.500H15.500V15.500H3.500Z" stroke-width="1.400" /><rect x="1" y="1" width="4" height="4" fill="#00e000" stroke="#111" /></svg>{@render caret(7)}
      </div>
      <div class="seg" style:width="108px">{@render person('#2f90f5', 'ring')}{@render person('#bcbcbc', 'bolt')}{@render person('#bcbcbc')}{@render t('1:1', 13)}{@render caret(7)}</div>
      <div class="seg" style:width="40px">
        <svg width="14" height="14" viewBox="0 0 16 16"><circle cx="8" cy="8" r="4" fill="none" stroke="#c0c0c0" stroke-width="3.500" /><g stroke="#c0c0c0" stroke-width="3">{#each dirs as d}<path d="M8 .8V3.500" transform="rotate({d} 8 8)" />{/each}</g></svg>{@render caret(7)}
      </div>
      <div class="seg one" style:width="26px"><svg width="14" height="14"><path d="M7 0V14M0 7H14" stroke="#ccc" stroke-width="1.500" /></svg></div>
      <div class="seg one" style:width="27px"><svg width="16" height="16" fill="none" stroke="#ccc" stroke-width="1.200"><path d="M1 2H6.500V7.500H1ZM6.500 9L4 14.500H9Z" /><circle cx="12" cy="9.500" r="3.200" /><path d="M8.500 3H13.500V5" /></svg></div>
      <div class="seg one" style:width="27px"><svg class="glow" width="18" height="18"><circle cx="9" cy="9" r="7.500" fill="#0e4f97" stroke="#2385e8" stroke-width="1.500" /><path d="M8.500 10.500L10 11.500L13 7.500" fill="none" stroke="#3e9df8" /></svg></div>
      <div class="seg one" style:width="26px"><svg width="17" height="18"><path d="M2 2H9L13 6V10H2Z" fill="#cfe6fa" stroke="#356" /><path d="M4 5h5M6 3v5" stroke="#2a6db5" stroke-width="1.500" /><path d="M1 10H11V15H1Z" fill="#f5cf3d" /><path d="M7 12L10 15.500L15.500 9" fill="none" stroke="#40c21a" stroke-width="2" /></svg></div>
      <div class="seg" style:width="50px">
        <svg width="17" height="14" fill="none" stroke="#ddd"><path d="M1 1H16V13H1Z" stroke-width="1.500" /><path d="M9 6L13 3.500M13 6.500V3.500H10M8 8L4 10.500M4 7.500V10.500H7" /></svg>
        <svg width="16" height="14"><path d="M0 1.500H15M0 7H15M0 12.500H15" stroke="#ddd" stroke-width="1.700" /></svg>
      </div>
    </div>
    <div class="edge"></div>
  </footer>
</div>

<style>
  :global(body) { margin: 0; overflow: hidden; background: #373737; }
  .app { width: 1366px; height: 728px; display: flex; flex-direction: column; overflow: hidden; font: 12px/16px 'Open Sans', 'Noto Sans', sans-serif; color: #f0f0f0; box-sizing: border-box; }
  .app :global(*) { box-sizing: border-box; }
  svg { display: block; flex: none; }
  .t { white-space: pre; display: inline-block; flex: none; }

  header { display: flex; height: 43px; flex: none; background: #545454; }
  .logo { width: 41px; height: 39px; padding: 1px 0 0 1px; border: 1px solid #000; border-left-color: #777; border-width: 0 2px 2px 1px; background: linear-gradient(#aaa, #7c7c7c 50%, #606060); }
  .heads { flex: 1; display: flex; flex-direction: column; }
  .titlebar { height: 23px; display: flex; background: #4b4a49; border-bottom: 1px solid #2c2c2c; }
  .quick { width: 238px; background: linear-gradient(#8a8a8a, #5c5c5c); border-right: 1px solid #666; }
  .title { width: 479px; padding: 2px 0 0 111px; display: flex; gap: 12px; color: #0c0c0c; }
  .search { width: 194px; display: flex; background: #616161; }
  .play { width: 14px; margin: 0; display: block; }
  .play::before { content: ''; display: block; margin: 6px 0 0 5px; border: 4px solid transparent; border-left: 5px solid #eee; border-right: 0; }
  .field { flex: 1; background: #797979; border: 1px solid #333; border-top: 0; padding: 2px 0 0 2px; font-style: italic; color: #c8c8c8; height: 21px; }
  .account { width: 251px; display: flex; background: linear-gradient(#8e8e8e, #5a5a5a); }
  .account .t { margin-top: 3px; }
  .window { flex: 1; display: flex; align-items: flex-start; padding: 4px 0 0 41px; gap: 35px; }
  .tabs { height: 20px; display: flex; gap: 20px; padding-left: 14px; background: #545454; border-bottom: 1px solid #2b2b2b; color: #dcdcdc; }
  .tab { padding-top: 2px; }
  .tab.active { margin: 1px -9px -1px; padding: 0 8px; width: 61px !important; background: linear-gradient(#777, #5e5e5e); border: 1px solid #2b2b2b; border-bottom: 0; color: #fff; font-weight: 600; border-radius: 2px 2px 0 0; height: 20px; }
  .tabs svg { margin: 5px 0 0 11px; }

  .ribbon { height: 101px; flex: none; display: flex; padding: 0 0 0 2px; background: linear-gradient(#4f4f4f, #393939 97px, #858585 98px, #858585 99px, #555 100px); }
  .panel { height: 97px; border-right: 1px solid #393939; background: #5c5c5c; display: flex; flex-direction: column; margin-right: 1px; }
  .texte { width: 307px; }
  .cotes { width: 315px; }
  .lignes { width: 338px; }
  .body { flex: 1; display: flex; }
  .foot { height: 18px; background: linear-gradient(#4d4d4d, #444); display: flex; justify-content: center; align-items: center; gap: 6px; position: relative; padding: 0 12px 1px 0; color: #fff; }
  .launcher { position: absolute; right: 4px; top: 6px; }
  .big { display: flex; flex-direction: column; align-items: center; }
  .texte .big { width: 68px; margin-left: 6px; padding-top: 5px; }
  .bigA { font: 40px/36px 'Open Sans', sans-serif; color: #e8e8e8; }
  .texte .big > .t { line-height: 16px; }
  .two { display: flex; line-height: 15px; }
  .downcaret { width: 7px; padding-top: 58px; margin: 0 -3px 0 -4px; }
  .side { display: flex; flex-direction: column; gap: 8px; padding: 8px 0 0 9px; width: 30px; }
  .stack { display: flex; flex-direction: column; gap: 2px; padding-top: 5px; }
  .combo { width: 200px; height: 22px; border: 1px solid #343434; background: linear-gradient(#6f6f6f, #5a5a5a); display: flex; align-items: center; justify-content: space-between; padding: 0 2px 1px 2px; color: #fff; }
  .find { background: #797979; font-style: italic; color: #bbb; padding-right: 0; }
  .cotes .big { width: 40px; padding: 7px 2px 0 2px; gap: 3px; }
  .cotes .combo { padding-right: 3px; }
  .line { display: flex; align-items: center; height: 22px; }
  .combo.color { width: 180px; gap: 2px; justify-content: flex-start; padding-left: 1px; }
  .color .caret { margin-left: auto; }
  .sw { width: 17px; height: 17px; background: #ff007f; border: 1px solid #111; }
  .tools { padding-left: 4px; }
  .line.tools .t { margin: 0 8px 0 5px; }
  .line.tools svg { margin-right: 8px; }
  .line.tools svg:first-child { margin-right: 0; }
  .line.tools svg:nth-last-child(2) { margin-right: 6px; }
  .icons { display: grid; grid-template-columns: 16px 16px 16px; gap: 8px; align-content: start; padding: 8px 0 0 4px; }
  .lignes .big { width: 136px; padding-top: 9px; gap: 1px; }
  .lignes .icons { grid-template-columns: 18px 18px; gap: 8px 6px; padding: 3px 0 0 3px; }
  .tile { width: 59px; height: 97px; margin: 0 1px; border: 1px solid #333; background: linear-gradient(#6d6d6d, #515151); display: flex; flex-direction: column; align-items: center; padding: 5px 1px 0 0; color: #fff; }
  .tile .t { margin-top: 2px; }
  .tile .caret { margin-top: 32px; }

  main { height: 553px; flex: none; display: flex; }
  aside { width: 190px; background: #5c5c5c; display: flex; flex-direction: column; overflow: hidden; border-right: 2px solid #5e5e5e; }
  h2 { margin: 2px 0 0; height: 21px; flex: none; background: #4c4c4c; font-size: 12px; font-weight: 400; line-height: 21px; display: flex; padding-left: 5px; border-radius: 3px 3px 0 0; color: #fff; }
  .grip { width: 4px; height: 11px; margin: 5px 6px 0 0; background: repeating-linear-gradient(#333 0 1px, transparent 1px 3px); }
  .layers { height: 302px; flex: none; border-bottom: 1px solid #484848; border-right: 1px solid #505050; overflow: hidden; }
  .find-row { display: flex; align-items: flex-end; height: 23px; padding: 0 0 0 4px; gap: 6px; }
  .find-row > .t { margin-bottom: -2px; }
  .lsearch { width: 125px; height: 17px; background: #666; display: flex; justify-content: space-between; align-items: center; color: #b0b0b0; }
  .lay-icons { height: 33px; display: flex; align-items: center; gap: 5px; padding-top: 1px; }
  .lay-icons svg:first-child { margin-right: 1px; }
  .refresh { margin: 0 4px 0 58px; }
  .table { display: flex; height: 246px; }
  .expand { width: 20px; flex: none; border-right: 1px solid #535353; color: #ccc; font: 20px/16px 'Open Sans', sans-serif; text-align: center; }
  .rows { flex: 1; padding-left: 3px; display: flex; flex-direction: column; }
  .row { display: grid; grid-template-columns: 24px 50px 38px 30px 23px; height: 18px; align-items: stretch; }
  .row > span { display: flex; align-items: center; justify-content: center; overflow: hidden; }
  .row > span:first-child { justify-content: flex-start; padding-left: 1px; }
  .row > span:nth-child(2) { justify-content: flex-start; padding-left: 3px; }
  .row > span:nth-child(3) { border-left: 2px solid #4d4d4d; }
  .row > span:nth-child(5) { justify-content: flex-start; padding-left: 10px; }
  .row.hd > span:first-child { padding-left: 5px; }
  .row.hd > span:nth-child(2) { padding-left: 5px; }
  .row.hd > span:nth-child(5) { padding-left: 5px; }
  .hd { height: 23px; background: #535353; }
  .hd > span { border-right: 1px solid #424242; }
  .sel { background: #939393; }
  .sel > span:nth-child(2) { color: #222; }
  .count { margin-top: auto; padding: 0 0 7px 16px; }
  .second { margin-top: 2px; }
  .props { flex: 1; display: flex; padding-left: 3px; }
  .scroll { width: 5px; height: 39px; margin: 38px 9px 0 0; border-radius: 3px; background: #414141; }
  .inner { width: 159px; padding-top: 11px; }
  .selrow { display: flex; gap: 7px; height: 24px; align-items: center; }
  .select { width: 88px; flex: none; height: 24px; border: 1px solid #303030; background: linear-gradient(#777, #626262); display: flex; align-items: center; padding-left: 3px; }
  .select b { margin-left: auto; width: 15px; height: 22px; border-left: 1px solid #333; display: flex; align-items: center; justify-content: center; }
  .group { margin-top: 3px; height: 20px; background: #454545; border: 1px solid #333; display: flex; align-items: center; justify-content: space-between; padding: 0 7px 0 6px; color: #fff; }
  .group i { width: 7px; height: 2px; background: #fff; }
  .prop { display: flex; height: 19px; margin-left: 17px; border-left: 1px solid #4d4d4d; border-right: 1px solid #4d4d4d; }
  .k { width: 61px; padding: 2px 0 0 5px; border-right: 1px solid #4d4d4d; border-bottom: 1px solid #4d4d4d; overflow: hidden; }
  .v { flex: 1; padding: 0 0 0 2px; display: flex; align-items: center; border-bottom: 1px solid #4d4d4d; overflow: hidden; }
  .v i { width: 10px; height: 10px; background: #ff007f; border: 1px solid #111; margin: 0 6px 0 1px; }
  .v svg { margin: 0 1px 0 1px; }

  .canvas { width: 1176px; height: 553px; position: relative; }
  .dims { font: 27px 'Liberation Sans', Arial, sans-serif; }
  .ui { font-family: 'Open Sans', sans-serif; }
  .compass { font-family: 'Liberation Sans', Arial, sans-serif; }
  .viewlabel { position: absolute; left: 4px; top: 6px; color: #f2f2f2; }
  .command { position: absolute; left: 235px; top: 526px; width: 707px; height: 27px; display: flex; border: 1px solid #555; }
  .command .tools { width: 53px; padding: 0; background: linear-gradient(#666, #3e3e3e); }
  .input { flex: 1; background: rgba(202, 203, 205, .93); display: flex; align-items: center; padding: 0 3px 2px 4px; gap: 6px; font: italic 11.500px 'DejaVu Sans Mono', monospace; color: #70757a; }
  .input i { margin-left: auto; border: 4px solid transparent; border-top: 0; border-bottom: 4px solid #222; }

  footer { height: 31px; display: grid; grid-template-columns: 783px 1fr; grid-template-rows: 28px 3px; background: #373737; }
  .sheetsbar { display: flex; padding-left: 13px; gap: 2px; border-top: 1px solid #555; }
  .sheet { height: 18px; color: #aaa; display: flex; justify-content: center; position: relative; margin-right: -1px; }
  .sheet::before { content: ''; position: absolute; inset: 0 -2px; background: linear-gradient(#4c4c4c, #686868); clip-path: polygon(0 0, 100% 0, calc(100% - 3px) 5px, calc(100% - 7px) 14px, calc(100% - 11px) 17px, 11px 17px, 7px 14px, 3px 5px); }
  .sheet span { position: relative; }
  .sheet.on { color: #fff; font-weight: 700; }
  .sheet.on::before { background: linear-gradient(#555, #8a8a8a); }
  .plus { margin-left: 4px; align-items: center; }
  .plus::before { clip-path: polygon(0 12px, 4px 4px, 8px 0, 100% 0, calc(100% - 2px) 10px, calc(100% - 7px) 17px, 3px 17px); }
  .status { display: flex; gap: .2px; padding-top: 1px; }
  .seg { height: 26px; flex: none; border: 1px solid #7c7c7c; background: #4c4c4c; display: flex; align-items: center; justify-content: space-between; padding: 0 4px; color: #fff; }
  .seg.one { justify-content: center; padding: 0; }
  .glow { filter: drop-shadow(0 0 2px #1f6fd0); }
  .edge { grid-column: 1 / -1; background: linear-gradient(90deg, #0c0c0c 48px, #2a2a2a 48px, #2a2a2a 50%, #111 50%); border-top: 1px solid #444; }
</style>
